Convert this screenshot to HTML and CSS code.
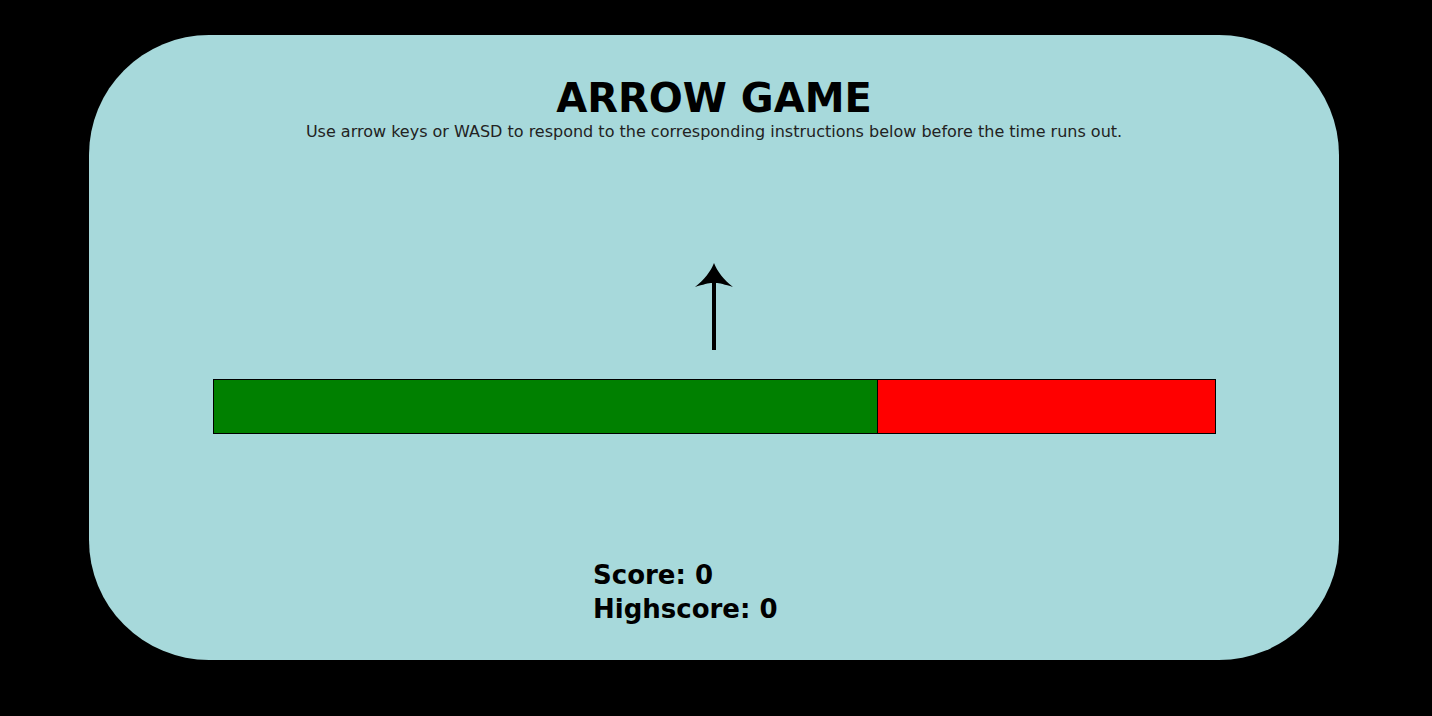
FILE: index.html
```html
<!DOCTYPE html>
<html>
<head>
<meta charset="utf-8">
<link rel="stylesheet" href="styles.css">
</head>
<body>
<div class="card">
  <h1 class="title">ARROW GAME</h1>
  <p class="subtitle">Use arrow keys or WASD to respond to the corresponding instructions below before the time runs out.</p>
  <svg class="arrow" width="40" height="88" viewBox="0 0 40 88" aria-label="up arrow">
    <path d="M20 1 C 23 9 30 18 39 25 C 31 22.5 25 21 22 21 L 22 88 L 18 88 L 18 21 C 15 21 9 22.5 1 25 C 10 18 17 9 20 1 Z" fill="#000"/>
  </svg>
  <div class="bar">
    <div class="bar-fill" style="width: 66.3%"></div>
    <div class="bar-rest"></div>
  </div>
  <div class="scores">
    <div class="score">Score: 0</div>
    <div class="score">Highscore: 0</div>
  </div>
</div>
</body>
</html>
```

FILE: styles.css
```css
html, body {
  margin: 0;
  padding: 0;
  background: #000;
}
body {
  font-family: "DejaVu Sans", Verdana, sans-serif;
  width: 1432px;
  height: 716px;
  overflow: hidden;
}
.card {
  margin: 35px 0 0 89px;
  width: 1250px;
  height: 625px;
  box-sizing: border-box;
  background: #a7d9db;
  border-radius: 120px;
  display: flex;
  flex-direction: column;
  align-items: center;
  padding-top: 40px;
}
.title {
  margin: 0;
  font-size: 40px;
  line-height: 46px;
  font-weight: bold;
  color: #000;
}
.subtitle {
  margin: 1px 0 0;
  font-size: 16px;
  line-height: 20px;
  color: #222;
}
.arrow {
  display: block;
  margin-top: 120px;
  margin-left: 0;
}
.bar {
  margin-top: 29px;
  width: 1003px;
  height: 55px;
  box-sizing: border-box;
  border: 1px solid #000;
  display: flex;
}
.bar-fill {
  background: #008000;
  border-right: 1px solid #000;
}
.bar-rest {
  flex: 1;
  background: #ff0000;
}
.scores {
  align-self: flex-start;
  margin: 124px 0 0 504px;
}
.score {
  font-size: 26px;
  line-height: 34px;
  font-weight: bold;
  color: #000;
}
```
